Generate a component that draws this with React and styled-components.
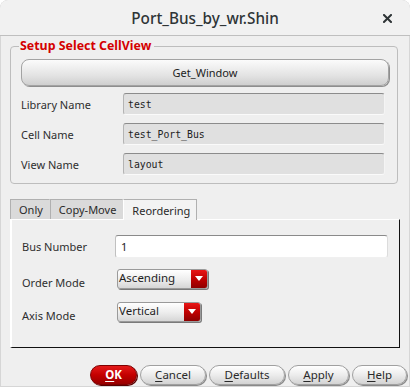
import React from "react";
import styled, { createGlobalStyle } from "styled-components";

const Global = createGlobalStyle`
  html, body { margin: 0; padding: 0; background: #ffffff; }
  body { font-family: "Noto Sans", "DejaVu Sans", sans-serif; font-size: 11px; color: #2e2e2e; }
  * { box-sizing: border-box; }
`;

const Window = styled.div`
  width: 410px;
  height: 387px;
  background: #efefef;
  border-radius: 8px 8px 0 0;
  display: flex;
  flex-direction: column;
  overflow: hidden;
  box-shadow: inset 0 0 0 1px #d6d6d6;
`;

const TitleBar = styled.div`
  height: 36px;
  flex: none;
  display: flex;
  align-items: center;
  justify-content: center;
  position: relative;
  background: #f1f1f1;
  border-bottom: 1px solid #bfbfbf;
  border-radius: 8px 8px 0 0;
`;

const Title = styled.div`
  font-size: 15.3px;
  font-weight: 500;
  color: #2e3436;
`;

const CloseButton = styled.div`
  position: absolute;
  right: 18px;
  top: 14px;
  width: 9px;
  height: 9px;
  display: flex;
`;

const Group = styled.fieldset`
  margin: 2px 12px 0 10px;
  padding: 5px 9px 8px 10px;
  border: 1px solid #bdbdbd;
  border-radius: 4px;
  min-width: 0;
`;

const Legend = styled.legend`
  padding: 0 3px 0 1px;
  margin-left: -2px;
  color: #d40000;
  font-weight: 700;
  font-size: 12.4px;
  line-height: 16px;
`;

const WideButton = styled.button`
  width: 368px;
  height: 27px;
  margin: 0 0 7px 0;
  display: block;
  font-family: inherit;
  font-size: 11px;
  color: #222;
  border: 1px solid #a3a3a3;
  border-radius: 8px;
  background: linear-gradient(#fbfbfb, #e4e4e4 60%, #cfcfcf);
  box-shadow: 1px 1px 0 #8e8e8e;
`;

const FieldGrid = styled.div`
  display: grid;
  grid-template-columns: 102px 262px;
  row-gap: 8px;
  align-items: center;
`;

const Label = styled.div`
  font-size: 11px;
  color: #2e2e2e;
  padding-top: ${(p) => p.$drop || 0}px;
`;

const ReadField = styled.div`
  height: 22px;
  background: #e0e0e0;
  border-top: 1px solid #8c8c8c;
  border-left: 1px solid #b4b4b4;
  border-right: 1px solid #f4f4f4;
  border-bottom: 1px solid #fafafa;
  border-radius: 3px;
  display: flex;
  align-items: center;
  padding-left: 4px;
  font-family: "DejaVu Sans Mono", "Liberation Mono", monospace;
  font-size: 9.8px;
  color: #222;
`;

const TabBar = styled.div`
  margin: 15px 0 0 10px;
  display: flex;
  height: 20px;
`;

const Tab = styled.div`
  padding: 0 6px 0 8px;
  display: flex;
  align-items: center;
  font-size: 11px;
  color: #2a2a2a;
  background: ${(p) => (p.$active ? "#f3f3f3" : "#dadada")};
  border-top: 1px solid #b0b0b0;
  border-left: 1px solid ${(p) => (p.$active ? "#ffffff" : "#b0b0b0")};
  border-right: 1px solid ${(p) => (p.$last ? "#b0b0b0" : "transparent")};
  position: relative;
  z-index: ${(p) => (p.$active ? 1 : 0)};
  margin-bottom: ${(p) => (p.$active ? "-1px" : "0")};
  height: ${(p) => (p.$active ? "21px" : "20px")};
`;

const Panel = styled.div`
  margin: 0 10px 0 10px;
  height: 129px;
  border-top: 1px solid #ffffff;
  border-left: 2px solid #ffffff;
  border-right: 1px solid #111111;
  border-bottom: 1px solid #111111;
  padding: 15px 11px 0 10px;
  display: grid;
  grid-template-columns: 93px 1fr;
  grid-auto-rows: min-content;
  align-items: center;
`;

const TextInput = styled.div`
  height: 23px;
  background: #ffffff;
  border-top: 1px solid #8a8a8a;
  border-left: 1px solid #c0c0c0;
  border-right: 1px solid #dcdcdc;
  border-bottom: 1px solid #f0f0f0;
  border-radius: 3px;
  display: flex;
  align-items: center;
  padding-left: 5px;
  font-size: 11px;
  color: #222;
`;

const Combo = styled.div`
  width: ${(p) => p.$w}px;
  height: 20px;
  margin: ${(p) => p.$mt}px 0 0 2px;
  display: flex;
  border: 1px solid #9a9a9a;
  border-radius: 3px;
  background: linear-gradient(#ffffff, #ececec 55%, #d6d6d6);
  box-shadow: 1px 1px 0 #7a7a7a;
  overflow: hidden;
`;

const ComboText = styled.div`
  flex: 1;
  display: flex;
  align-items: center;
  padding-left: 1px;
  font-size: 11.5px;
  color: #1e1e1e;
  line-height: 1;
  padding-bottom: 2px;
`;

const ComboArrow = styled.div`
  width: 16px;
  display: flex;
  align-items: center;
  justify-content: center;
  background: linear-gradient(#e81616, #c00000 50%, #8e0000);
`;

const ButtonRow = styled.div`
  margin-top: 17px;
  display: flex;
  justify-content: flex-end;
  gap: 3px;
  padding-right: 3px;
`;

const DlgButton = styled.button`
  width: ${(p) => p.$w}px;
  height: 20px;
  padding: 0;
  font-family: inherit;
  font-size: 11.5px;
  border-radius: 10px;
  border: 1px solid ${(p) => (p.$primary ? "#7e0000" : "#a0a0a0")};
  background: ${(p) =>
    p.$primary
      ? "linear-gradient(#e41a1a, #c40000 50%, #980000)"
      : "linear-gradient(#ffffff, #ececec 50%, #d3d3d3)"};
  color: ${(p) => (p.$primary ? "#ffffff" : "#2a2a2a")};
  font-weight: ${(p) => (p.$primary ? 700 : 400)};
  box-shadow: 1px 1px 0 ${(p) => (p.$primary ? "#5a0000" : "#8a8a8a")};
  line-height: 18px;
  & u { text-decoration-thickness: 1px; text-underline-offset: 2px; }
`;

function Arrow() {
  return (
    <svg width="8" height="5" viewBox="0 0 8 5">
      <polygon points="0,0 8,0 4,5" fill="#ffffff" />
    </svg>
  );
}

export default function App() {
  return (
    <>
      <Global />
      <Window>
        <TitleBar>
          <Title>Port_Bus_by_wr.Shin</Title>
          <CloseButton>
            <svg width="9" height="9" viewBox="0 0 9 9">
              <path d="M1 1 L8 8 M8 1 L1 8" stroke="#2e3436" strokeWidth="2" strokeLinecap="square" />
            </svg>
          </CloseButton>
        </TitleBar>

        <Group>
          <Legend>Setup Select CellView</Legend>
          <WideButton>Get_Window</WideButton>
          <FieldGrid>
            <Label>Library Name</Label>
            <ReadField>test</ReadField>
            <Label>Cell Name</Label>
            <ReadField>test_Port_Bus</ReadField>
            <Label>View Name</Label>
            <ReadField>layout</ReadField>
          </FieldGrid>
        </Group>

        <TabBar>
          <Tab>Only</Tab>
          <Tab>Copy-Move</Tab>
          <Tab $active $last>Reordering</Tab>
        </TabBar>
        <Panel>
          <Label>Bus Number</Label>
          <TextInput>1</TextInput>
          <Label $drop={17}>Order Mode</Label>
          <Combo $w={91} $mt={9}>
            <ComboText>Ascending</ComboText>
            <ComboArrow><Arrow /></ComboArrow>
          </Combo>
          <Label $drop={18}>Axis Mode</Label>
          <Combo $w={84} $mt={10}>
            <ComboText>Vertical</ComboText>
            <ComboArrow><Arrow /></ComboArrow>
          </Combo>
        </Panel>

        <ButtonRow>
          <DlgButton $primary $w={47}><u>O</u>K</DlgButton>
          <DlgButton $w={66}><u>C</u>ancel</DlgButton>
          <DlgButton $w={76}><u>D</u>efaults</DlgButton>
          <DlgButton $w={61}><u>A</u>pply</DlgButton>
          <DlgButton $w={55}><u>H</u>elp</DlgButton>
        </ButtonRow>
      </Window>
    </>
  );
}
